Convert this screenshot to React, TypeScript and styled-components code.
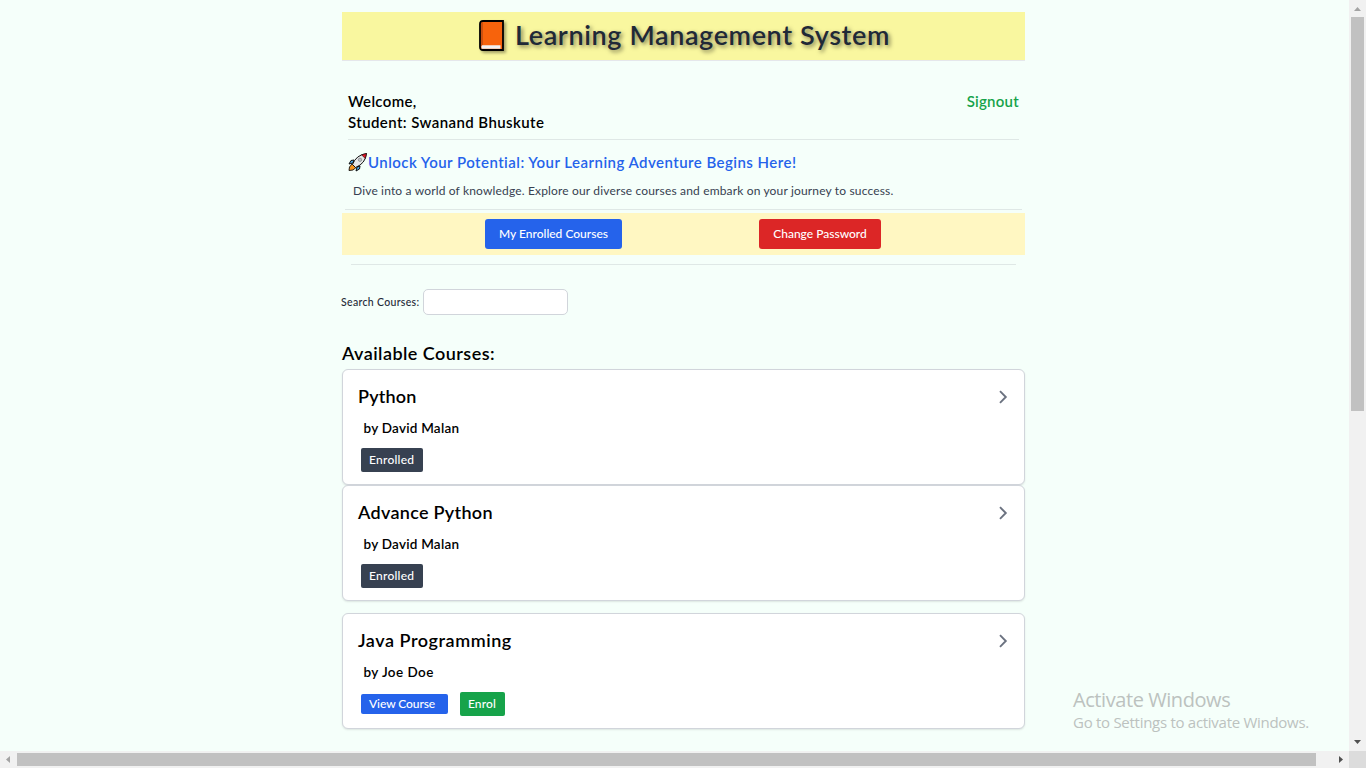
import React from "react";
import styled, { createGlobalStyle } from "styled-components";

const GlobalStyle = createGlobalStyle`
  * { box-sizing: border-box; }
  body {
    margin: 0;
    overflow: hidden;
    background: #f5fffa;
    color: #000;
    font-family: "Trebuchet MS", Lato, "Open Sans", sans-serif;
    font-kerning: normal;
    font-variant-ligatures: none;
  }
  h1, h2, h3, p { margin: 0; }
`;

const Window = styled.div`
  display: grid;
  grid-template: 751px 17px / 1349px 17px;
  width: 1366px;
  height: 768px;
  position: relative;
`;

const Viewport = styled.div`
  overflow: hidden;
`;

const Page = styled.main`
  width: 683px;
  margin-left: 342px;
  padding-top: 12px;
  display: flex;
  flex-direction: column;
`;

const T = styled.span<{ $ls?: number }>`
  letter-spacing: ${(p) => p.$ls ?? 0}px;
  white-space: nowrap;
`;

const Banner = styled.header`
  height: 49px;
  background: #f9f79f;
  border-bottom: 1px solid #e5e7eb;
  display: flex;
  align-items: center;
  padding-left: 136px;
  gap: 9px;
`;

const BookIcon = styled.svg`
  width: 28px;
  height: 34px;
  filter: drop-shadow(2px 2px 1.5px rgba(0, 0, 0, 0.35));
`;

const Title = styled.h1`
  padding-bottom: 2px;
  font-size: 27px;
  line-height: 30px;
  font-weight: 600;
  color: #1f2937;
  text-shadow: 2px 2px 4px rgba(0, 0, 0, 0.5);
`;

const Greeting = styled.section`
  display: flex;
  justify-content: space-between;
  margin: 30px 6px 0;
  height: 49px;
  border-bottom: 1px solid #dfe8e6;
  font-size: 15px;
  line-height: 21px;
  font-weight: 600;
`;

const SignOut = styled.a`
  color: #16a34a;
`;

const Intro = styled.section`
  margin: 0 3px;
  height: 70px;
  padding: 11px 3px 0;
  border-bottom: 1px solid #dfe8e6;
`;

const Tagline = styled.h2`
  display: flex;
  align-items: center;
  height: 22px;
  font-size: 15px;
  font-weight: 600;
  color: #2563eb;
`;

const RocketIcon = styled.svg`
  width: 20px;
  height: 20px;
`;

const Blurb = styled.p`
  margin: 9px 0 0 5px;
  font-size: 12px;
  line-height: 18px;
  color: #374151;
`;

const Actions = styled.nav`
  margin-top: 3px;
  height: 42px;
  display: flex;
  align-items: center;
  padding-left: 143px;
  gap: 137px;
  background: #fff7c2;
`;

const ActionButton = styled.button<{ $bg: string; $w: number }>`
  width: ${(p) => p.$w}px;
  height: 30px;
  padding: 0;
  border: 0;
  border-radius: 3px;
  background: ${(p) => p.$bg};
  color: #fff;
  font: 500 12px/18px "Trebuchet MS", Lato, sans-serif;
`;

const Divider = styled.hr`
  width: 665px;
  margin: 9px auto 0;
  border: 0;
  border-top: 1px solid #dfe8e6;
`;

const SearchRow = styled.label`
  display: flex;
  align-items: center;
  margin: 24px 0 0 -1px;
  font-size: 10.5px;
  font-weight: 500;
  color: #1f2937;
`;

const SearchLabel = styled.span`
  width: 82px;
`;

const SearchInput = styled.input`
  width: 145px;
  height: 26px;
  border: 1px solid #d1d5db;
  border-radius: 5px;
  background: #fff;
`;

const SectionTitle = styled.h2`
  margin-top: 27px;
  height: 27px;
  font-size: 18px;
  line-height: 22px;
  font-weight: 600;
`;

const Card = styled.article<{ $gap?: number }>`
  height: 116px;
  margin-top: ${(p) => p.$gap ?? 0}px;
  padding: 14px 15px 0;
  border: 1px solid #d1d5db;
  border-radius: 6px;
  background: #fff;
  box-shadow: 0 1px 2px rgba(0, 0, 0, 0.1);
`;

const CardHead = styled.div`
  display: flex;
  justify-content: space-between;
  align-items: center;
  height: 26px;
`;

const CardTitle = styled.h3`
  padding-bottom: 2px;
  font-size: 18px;
  font-weight: 600;
`;

const Chevron = styled.svg`
  width: 12px;
  height: 16px;
  fill: none;
  stroke: #6b7280;
  stroke-width: 1.9;
`;

const Author = styled.p`
  margin: 8px 0 0 5.5px;
  font-size: 13.5px;
  line-height: 20px;
  font-weight: 600;
`;

const Tags = styled.div`
  display: flex;
  align-items: center;
  gap: 12px;
  height: 24px;
  margin: 10px 0 0 3px;
`;

const Tag = styled.span<{ $bg: string; $w: number; $h?: number }>`
  display: flex;
  align-items: center;
  width: ${(p) => p.$w}px;
  height: ${(p) => p.$h ?? 24}px;
  padding: 0 0 2px 8px;
  border-radius: 2px;
  background: ${(p) => p.$bg};
  color: #fff;
  font-size: 12px;
  font-weight: 500;
`;

const VerticalBar = styled.div`
  background: #f1f1f1;
  display: flex;
  flex-direction: column;
  align-items: center;
  justify-content: space-between;
`;

const HorizontalBar = styled.div`
  background: #f1f1f1;
  display: flex;
  align-items: center;
  justify-content: space-between;
`;

const VerticalThumb = styled.div`
  width: 13px;
  height: 394px;
  margin-bottom: 323px;
  background: #c1c1c1;
`;

const HorizontalThumb = styled.div`
  width: 1299px;
  height: 13px;
  margin-right: 16px;
  background: #c1c1c1;
`;

const Arrow = styled.svg`
  width: 17px;
  height: 17px;
  flex: none;
`;

const Corner = styled.div`
  background: #dcdcdc;
`;

const Watermark = styled.aside`
  position: absolute;
  left: 1073px;
  top: 687px;
  color: #bcc2bf;
  font-family: "Segoe UI", "Open Sans", sans-serif;
`;

const WatermarkTitle = styled.p`
  font-size: 20px;
  line-height: 25px;
`;

const WatermarkText = styled.p`
  font-size: 15px;
  line-height: 20px;
`;

type Label = { text: string; ls?: number };

type Course = {
  title: Label;
  author: Label;
  gap?: number;
  tags: (Label & { bg: string; w: number; h?: number })[];
};

const enrolled = { text: "Enrolled", ls: 0.25, bg: "#374151", w: 62 };

const courses: Course[] = [
  { title: { text: "Python", ls: 0.2 }, author: { text: "by David Malan", ls: 0.23 }, tags: [enrolled] },
  { title: { text: "Advance Python", ls: 0.3 }, author: { text: "by David Malan", ls: 0.23 }, tags: [enrolled] },
  {
    title: { text: "Java Programming", ls: 0.54 },
    author: { text: "by Joe Doe", ls: 0.43 },
    gap: 12,
    tags: [
      { text: "View Course", ls: -0.08, bg: "#2563eb", w: 87, h: 20 },
      { text: "Enrol", ls: 0.1, bg: "#16a34a", w: 45 },
    ],
  },
];

function Book() {
  return (
    <BookIcon viewBox="0 0 28 34">
      <path d="M5 2H25V31H5Q2 31 2 28V5Q2 2 5 2Z" fill="#f7630c" stroke="#000" strokeWidth="1.8" />
      <path d="M3 5Q3 3 5 3V26.5L3 27.5Z" fill="#ca5010" />
      <path d="M4 26.2H22.5V29.8H3.5V27.5Z" fill="#f2f2f2" />
    </BookIcon>
  );
}

function Rocket() {
  return (
    <RocketIcon viewBox="0 0 20 20">
      <path d="M6 8L3 8.5L1 12L5 11Z" fill="#4aa3df" stroke="#111" />
      <path d="M12 14L11.5 17L8 19L9 15Z" fill="#4aa3df" stroke="#111" />
      <path d="M4 12L1.5 15L1 18.5L5 18L8 15.5Z" fill="#f7941d" stroke="#111" strokeWidth="0.9" />
      <path d="M4.5 12.5Q8 3 18.5 1.5Q17.5 11.5 7.5 15.5Z" fill="#e6e7e8" stroke="#111" />
      <path d="M13.5 2.8L18.5 1.5L17.3 6.5Z" fill="#e81224" stroke="#111" strokeWidth="0.6" />
      <circle cx="12" cy="7.8" r="1.7" fill="#bdc3c7" stroke="#777" strokeWidth="0.6" />
    </RocketIcon>
  );
}

function CourseCard({ title, author, gap, tags }: Course) {
  return (
    <Card $gap={gap}>
      <CardHead>
        <CardTitle><T $ls={title.ls}>{title.text}</T></CardTitle>
        <Chevron viewBox="0 0 12 16"><path d="M3 2.2L8.8 8L3 13.8" /></Chevron>
      </CardHead>
      <Author><T $ls={author.ls}>{author.text}</T></Author>
      <Tags>
        {tags.map((tag) => (
          <Tag key={tag.text} $bg={tag.bg} $w={tag.w} $h={tag.h}>
            <T $ls={tag.ls}>{tag.text}</T>
          </Tag>
        ))}
      </Tags>
    </Card>
  );
}

export default function App() {
  return (
    <>
      <GlobalStyle />
      <Window>
        <Viewport>
          <Page>
            <Banner>
              <Book />
              <Title><T $ls={0.62}>Learning Management System</T></Title>
            </Banner>
            <Greeting>
              <div>
                <p><T $ls={0.33}>Welcome,</T></p>
                <p><T $ls={0.41}>Student: Swanand Bhuskute</T></p>
              </div>
              <SignOut><T $ls={0.25}>Signout</T></SignOut>
            </Greeting>
            <Intro>
              <Tagline>
                <Rocket />
                <T $ls={0.46}>Unlock Your Potential: Your Learning Adventure Begins Here!</T>
              </Tagline>
              <Blurb>
                <T $ls={0.16}>Dive into a world of knowledge. Explore our diverse courses and embark on your journey to success.</T>
              </Blurb>
            </Intro>
            <Actions>
              <ActionButton $bg="#2563eb" $w={137}><T>My Enrolled Courses</T></ActionButton>
              <ActionButton $bg="#dc2626" $w={122}><T>Change Password</T></ActionButton>
            </Actions>
            <Divider />
            <SearchRow>
              <SearchLabel><T $ls={0.32}>Search Courses:</T></SearchLabel>
              <SearchInput />
            </SearchRow>
            <SectionTitle><T $ls={0.45}>Available Courses:</T></SectionTitle>
            {courses.map((course) => <CourseCard key={course.title.text} {...course} />)}
          </Page>
        </Viewport>
        <VerticalBar>
          <Arrow viewBox="0 0 17 17"><path d="M5 11L8.5 7L12 11Z" fill="#a3a3a3" /></Arrow>
          <VerticalThumb />
          <Arrow viewBox="0 0 17 17"><path d="M5 6L8.5 10L12 6Z" fill="#505050" /></Arrow>
        </VerticalBar>
        <HorizontalBar>
          <Arrow viewBox="0 0 17 17"><path d="M10 5L6 8.5L10 12Z" fill="#a3a3a3" /></Arrow>
          <HorizontalThumb />
          <Arrow viewBox="0 0 17 17"><path d="M7 5L11 8.5L7 12Z" fill="#505050" /></Arrow>
        </HorizontalBar>
        <Corner />
        <Watermark>
          <WatermarkTitle><T $ls={-0.43}>Activate Windows</T></WatermarkTitle>
          <WatermarkText><T $ls={-0.28}>Go to Settings to activate Windows.</T></WatermarkText>
        </Watermark>
      </Window>
    </>
  );
}
